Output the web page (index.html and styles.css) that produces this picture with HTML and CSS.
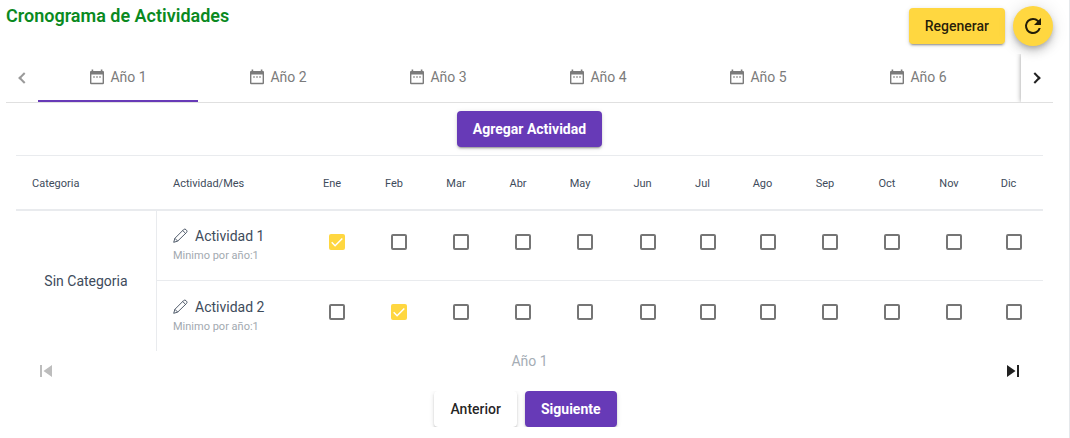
FILE: index.html
```html
<!DOCTYPE html>
<html lang="es">
<head>
  <meta charset="UTF-8" />
  <meta name="viewport" content="width=device-width, initial-scale=1.0"/>
  <title>Cronograma de Actividades</title>
  <link rel="stylesheet" href="styles.css">
</head>
<body>

  <svg class="sprite" aria-hidden="true">
    <symbol id="icon-calendar" viewBox="0 0 16 16">
      <path d="M2.6 0.5h1.6V2h7.6V0.5h1.6V2H14a1 1 0 0 1 1 1v11a1.2 1.2 0 0 1-1.2 1.2H2.2A1.2 1.2 0 0 1 1 14V3a1 1 0 0 1 1-1h.6zM2.4 5.6v8.1h11.2V5.6zM4 7.4h2v1.2H4zm3 0h2v1.2H7zm3 0h2v1.2h-2z" fill-rule="evenodd"/>
    </symbol>
    <symbol id="icon-pencil" viewBox="0 0 16 16">
      <path d="M.7 14.3l1.2-4L10.6 1.6a1.8 1.8 0 0 1 2.4 0l.5.5a1.8 1.8 0 0 1 0 2.4L4.7 13.1zM1.9 10.3l2.8 2.8M9.7 2.5l2.9 2.9" fill="none" stroke="currentColor" stroke-width="0.9" stroke-linejoin="round"/>
    </symbol>
  </svg>

  <div class="page">
    <header class="header">
      <h1>Cronograma de Actividades</h1>
      <div class="header-actions">
        <button class="btn btn-accent">Regenerar</button>
        <button class="fab" aria-label="Recargar">
          <svg viewBox="0 0 24 24"><path d="M17.65 6.35A7.96 7.96 0 0 0 12 4a8 8 0 1 0 7.73 10h-2.08A6 6 0 1 1 12 6c1.66 0 3.14.69 4.22 1.78L13 11h7V4z"/></svg>
        </button>
      </div>
    </header>

    <nav class="tabs">
      <button class="pager pager-off" aria-label="Anteriores" disabled><span class="chevron chevron-left"></span></button>
      <div class="tab-list" role="tablist">
        <button class="tab active" role="tab"><svg><use href="#icon-calendar"/></svg>Año 1</button>
        <button class="tab" role="tab"><svg><use href="#icon-calendar"/></svg>Año 2</button>
        <button class="tab" role="tab"><svg><use href="#icon-calendar"/></svg>Año 3</button>
        <button class="tab" role="tab"><svg><use href="#icon-calendar"/></svg>Año 4</button>
        <button class="tab" role="tab"><svg><use href="#icon-calendar"/></svg>Año 5</button>
        <button class="tab" role="tab"><svg><use href="#icon-calendar"/></svg>Año 6</button>
      </div>
      <button class="pager pager-next" aria-label="Siguientes"><span class="chevron"></span></button>
    </nav>

    <main class="content">
      <div class="add-row">
        <button class="btn btn-primary">Agregar Actividad</button>
      </div>

      <table class="schedule">
        <colgroup>
          <col class="col-category">
          <col class="col-activity">
          <col class="col-month" span="5">
          <col class="col-month-wide">
          <col class="col-month-narrow">
          <col class="col-month-wide">
          <col class="col-month" span="3">
          <col class="col-month-wide">
        </colgroup>
        <thead>
          <tr>
            <th>Categoria</th>
            <th>Actividad/Mes</th>
            <th class="month">Ene</th>
            <th class="month">Feb</th>
            <th class="month">Mar</th>
            <th class="month">Abr</th>
            <th class="month">May</th>
            <th class="month">Jun</th>
            <th class="month">Jul</th>
            <th class="month">Ago</th>
            <th class="month">Sep</th>
            <th class="month">Oct</th>
            <th class="month">Nov</th>
            <th class="month">Dic</th>
          </tr>
        </thead>
        <tbody>
          <tr>
            <td class="category" rowspan="2">Sin Categoria</td>
            <td class="activity">
              <div class="activity-name"><svg><use href="#icon-pencil"/></svg>Actividad 1</div>
              <small>Minimo por año:1</small>
            </td>
            <td class="month"><input type="checkbox" aria-label="Actividad 1 Ene" checked></td>
            <td class="month"><input type="checkbox" aria-label="Actividad 1 Feb"></td>
            <td class="month"><input type="checkbox" aria-label="Actividad 1 Mar"></td>
            <td class="month"><input type="checkbox" aria-label="Actividad 1 Abr"></td>
            <td class="month"><input type="checkbox" aria-label="Actividad 1 May"></td>
            <td class="month"><input type="checkbox" aria-label="Actividad 1 Jun"></td>
            <td class="month"><input type="checkbox" aria-label="Actividad 1 Jul"></td>
            <td class="month"><input type="checkbox" aria-label="Actividad 1 Ago"></td>
            <td class="month"><input type="checkbox" aria-label="Actividad 1 Sep"></td>
            <td class="month"><input type="checkbox" aria-label="Actividad 1 Oct"></td>
            <td class="month"><input type="checkbox" aria-label="Actividad 1 Nov"></td>
            <td class="month"><input type="checkbox" aria-label="Actividad 1 Dic"></td>
          </tr>
          <tr>
            <td class="activity">
              <div class="activity-name"><svg><use href="#icon-pencil"/></svg>Actividad 2</div>
              <small>Minimo por año:1</small>
            </td>
            <td class="month"><input type="checkbox" aria-label="Actividad 2 Ene"></td>
            <td class="month"><input type="checkbox" aria-label="Actividad 2 Feb" checked></td>
            <td class="month"><input type="checkbox" aria-label="Actividad 2 Mar"></td>
            <td class="month"><input type="checkbox" aria-label="Actividad 2 Abr"></td>
            <td class="month"><input type="checkbox" aria-label="Actividad 2 May"></td>
            <td class="month"><input type="checkbox" aria-label="Actividad 2 Jun"></td>
            <td class="month"><input type="checkbox" aria-label="Actividad 2 Jul"></td>
            <td class="month"><input type="checkbox" aria-label="Actividad 2 Ago"></td>
            <td class="month"><input type="checkbox" aria-label="Actividad 2 Sep"></td>
            <td class="month"><input type="checkbox" aria-label="Actividad 2 Oct"></td>
            <td class="month"><input type="checkbox" aria-label="Actividad 2 Nov"></td>
            <td class="month"><input type="checkbox" aria-label="Actividad 2 Dic"></td>
          </tr>
        </tbody>
      </table>

      <div class="year-nav">
        <button class="icon-btn" aria-label="Año anterior" disabled>
          <svg viewBox="0 0 24 24"><path d="M6 6h2v12H6zm3.5 6l8.5 6V6z"/></svg>
        </button>
        <span>Año 1</span>
        <button class="icon-btn" aria-label="Año siguiente">
          <svg viewBox="0 0 24 24"><path d="M6 18l8.5-6L6 6v12zM16 6v12h2V6h-2z"/></svg>
        </button>
      </div>
    </main>

    <div class="steps">
      <button class="btn btn-plain">Anterior</button>
      <button class="btn btn-primary">Siguiente</button>
    </div>
  </div>

</body>
</html>
```
FILE: styles.css
```css
* {
  box-sizing: border-box;
}

body {
  margin: 0;
  font-family: Roboto, sans-serif;
  font-size: 14px;
  color: #3e4b5b;
  background: #fff;
}

button {
  font-family: inherit;
  font-size: 14px;
  border: none;
  background: transparent;
  padding: 0;
  cursor: pointer;
}

svg {
  fill: currentColor;
}

.sprite {
  display: none;
}

.page {
  min-height: 100vh;
  padding: 6px 16px 0 6px;
  border-right: 1px solid #e5e8eb;
}

/* header */
.header {
  display: flex;
  justify-content: space-between;
  align-items: flex-start;
  height: 48px;
}

h1 {
  margin: 0;
  font-size: 18px;
  font-weight: 600;
  line-height: 20px;
  color: #0a8a1f;
}

.header-actions {
  display: flex;
  align-items: center;
  gap: 8px;
}

.btn {
  height: 36px;
  padding: 0 16px;
  border-radius: 4px;
  font-weight: 500;
  box-shadow: 0 3px 1px -2px rgba(0,0,0,.2), 0 2px 2px 0 rgba(0,0,0,.14), 0 1px 5px 0 rgba(0,0,0,.12);
}

.btn-accent {
  background: #ffd740;
  color: rgba(0,0,0,.87);
}

.btn-primary {
  background: #673ab7;
  color: #fff;
  font-weight: 700;
}

.btn-plain {
  background: #fff;
  color: rgba(0,0,0,.87);
}

.fab {
  display: flex;
  align-items: center;
  justify-content: center;
  width: 40px;
  height: 40px;
  border-radius: 50%;
  background: #ffd740;
  color: rgba(0,0,0,.87);
  box-shadow: 0 3px 5px -1px rgba(0,0,0,.2), 0 6px 10px 0 rgba(0,0,0,.14), 0 1px 18px 0 rgba(0,0,0,.12);
}

.fab svg,
.icon-btn svg {
  width: 24px;
  height: 24px;
}

/* tabs */
.tabs {
  display: flex;
  height: 49px;
  border-bottom: 1px solid #e0e0e0;
}

.tab-list {
  display: flex;
  flex: 1;
  overflow: hidden;
}

.tab {
  display: flex;
  flex: none;
  align-items: center;
  justify-content: center;
  gap: 5px;
  width: 160px;
  border-bottom: 2px solid transparent;
  color: #7b7b7b;
}

.tab svg {
  width: 16px;
  height: 16px;
}

.tab.active {
  border-color: #673ab7;
}

.pager {
  display: flex;
  flex: none;
  align-items: center;
  justify-content: center;
  width: 32px;
}

.pager-next {
  box-shadow: 0 0 5px rgba(0,0,0,.4);
  clip-path: inset(0 0 0 -8px);
}

.chevron {
  width: 8px;
  height: 8px;
  margin-right: 4px;
  border: solid #212121;
  border-width: 2px 2px 0 0;
  transform: rotate(45deg);
}

.pager-off .chevron {
  border-color: #9a9a9a;
}

.chevron-left {
  margin: 0 0 0 4px;
  transform: rotate(-135deg);
}

/* schedule */
.content {
  padding: 8px 10px 0;
}

.add-row {
  display: flex;
  justify-content: center;
  padding-bottom: 8px;
}

.schedule {
  width: 100%;
  table-layout: fixed;
  border-spacing: 0;
}

.col-category { width: 141px; }
.col-activity { width: 144px; }
.col-month { width: 62px; }
.col-month-wide { width: 63px; }
.col-month-narrow { width: 57px; }

.schedule th {
  height: 56px;
  padding: 2px 16px 0;
  border-top: 1px solid #e9ebee;
  border-bottom: 2px solid #e9ebee;
  font-size: 11px;
  font-weight: 400;
  text-align: left;
}

.schedule td {
  height: 70px;
  padding: 0 16px;
}

.schedule .month {
  padding-left: 0;
  padding-right: 0;
  text-align: center;
}

.schedule .month:last-child {
  padding-right: 6px;
}

.schedule tbody tr:first-child td:not(.category) {
  border-bottom: 1px solid #e9ebee;
}

.schedule .category {
  border-right: 1px solid #e9ebee;
  text-align: center;
  padding: 0;
}

.activity-name {
  display: flex;
  align-items: center;
  gap: 6px;
  line-height: 20px;
}

.activity-name svg {
  width: 16px;
  height: 16px;
}

.activity small {
  display: block;
  font-size: 11px;
  line-height: 19px;
  color: #a2a9b0;
}

/* the box sits a little right of the month name */
input[type="checkbox"] {
  appearance: none;
  display: inline-block;
  width: 16px;
  height: 16px;
  margin: 0 0 8px 10px;
  border: 2px solid #757575;
  border-radius: 2px;
  background: #fff;
  vertical-align: middle;
}

input[type="checkbox"]:checked {
  border: none;
  background: #ffd740 url("data:image/svg+xml,%3Csvg xmlns='http://www.w3.org/2000/svg' viewBox='0 0 16 16'%3E%3Cpath d='M2.7 8.3l3.4 3.4 7.2-7.2' fill='none' stroke='white' stroke-width='1.5'/%3E%3C/svg%3E");
}

/* bottom navigation */
.year-nav {
  display: flex;
  justify-content: space-between;
  height: 40px;
  padding: 0 10px;
  line-height: 20px;
  color: #a5adb5;
}

.icon-btn {
  display: flex;
  align-items: center;
  justify-content: center;
  width: 40px;
  height: 40px;
  color: #212121;
}

.icon-btn:disabled {
  color: #bdbdbd;
}

.steps {
  display: flex;
  justify-content: center;
  overflow: hidden;
}

.steps .btn {
  margin-right: 8px;
}
```
